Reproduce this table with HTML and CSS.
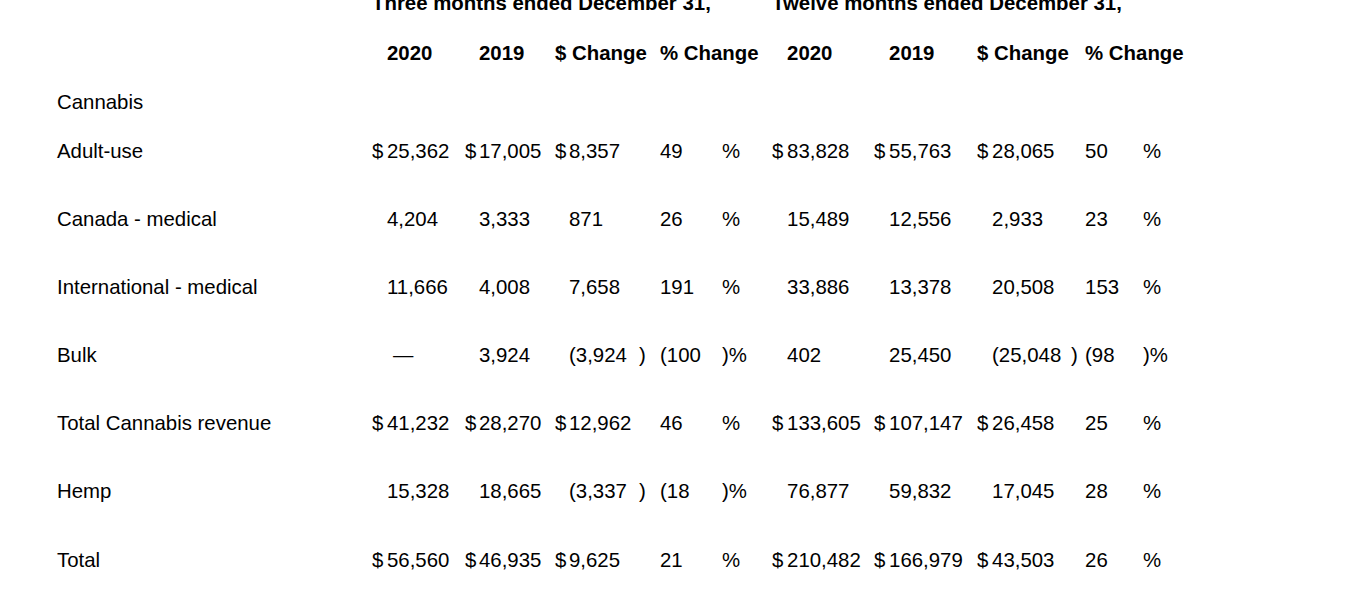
FILE: index.html
```html
<!DOCTYPE html>
<html lang="en">
<head>
<meta charset="utf-8">
<title>Revenue table</title>
<link rel="stylesheet" href="styles.css">
</head>
<body>
<div class="page">
<table class="fin">
  <colgroup>
    <col class="w-label">
    <col class="w15"><col class="w78"><col class="w14"><col class="w76"><col class="w14"><col class="w70"><col class="w21"><col class="w62"><col class="w50">
    <col class="w15"><col class="w87"><col class="w15"><col class="w88"><col class="w15"><col class="w79"><col class="w14"><col class="w58"><col class="w60">
  </colgroup>
  <tbody>
    <tr class="r-title">
      <td></td>
      <td colspan="9" class="b">Three months ended December 31,</td>
      <td colspan="9" class="b">Twelve months ended December 31,</td>
    </tr>
    <tr class="r-head">
      <td></td>
      <td></td><td class="b">2020</td>
      <td></td><td class="b">2019</td>
      <td colspan="3" class="b">$ Change</td>
      <td colspan="2" class="b">% Change</td>
      <td></td><td class="b">2020</td>
      <td></td><td class="b">2019</td>
      <td colspan="3" class="b">$ Change</td>
      <td colspan="2" class="b">% Change</td>
    </tr>
    <tr class="r-49">
      <td>Cannabis</td>
      <td></td><td></td><td></td><td></td><td></td><td></td><td></td><td></td><td></td>
      <td></td><td></td><td></td><td></td><td></td><td></td><td></td><td></td><td></td>
    </tr>
    <tr class="r-49">
      <td>Adult-use</td>
      <td>$</td><td>25,362</td><td>$</td><td>17,005</td><td>$</td><td>8,357</td><td></td><td>49</td><td>%</td>
      <td>$</td><td>83,828</td><td>$</td><td>55,763</td><td>$</td><td>28,065</td><td></td><td>50</td><td>%</td>
    </tr>
    <tr class="r-68">
      <td>Canada - medical</td>
      <td></td><td>4,204</td><td></td><td>3,333</td><td></td><td>871</td><td></td><td>26</td><td>%</td>
      <td></td><td>15,489</td><td></td><td>12,556</td><td></td><td>2,933</td><td></td><td>23</td><td>%</td>
    </tr>
    <tr class="r-68">
      <td>International - medical</td>
      <td></td><td>11,666</td><td></td><td>4,008</td><td></td><td>7,658</td><td></td><td>191</td><td>%</td>
      <td></td><td>33,886</td><td></td><td>13,378</td><td></td><td>20,508</td><td></td><td>153</td><td>%</td>
    </tr>
    <tr class="r-68">
      <td>Bulk</td>
      <td></td><td class="dash">—</td><td></td><td>3,924</td><td></td><td>(3,924</td><td>)</td><td>(100</td><td>)%</td>
      <td></td><td>402</td><td></td><td>25,450</td><td></td><td>(25,048</td><td>)</td><td>(98</td><td>)%</td>
    </tr>
    <tr class="r-68">
      <td>Total Cannabis revenue</td>
      <td>$</td><td>41,232</td><td>$</td><td>28,270</td><td>$</td><td>12,962</td><td></td><td>46</td><td>%</td>
      <td>$</td><td>133,605</td><td>$</td><td>107,147</td><td>$</td><td>26,458</td><td></td><td>25</td><td>%</td>
    </tr>
    <tr class="r-68">
      <td>Hemp</td>
      <td></td><td>15,328</td><td></td><td>18,665</td><td></td><td>(3,337</td><td>)</td><td>(18</td><td>)%</td>
      <td></td><td>76,877</td><td></td><td>59,832</td><td></td><td>17,045</td><td></td><td>28</td><td>%</td>
    </tr>
    <tr class="r-69">
      <td>Total</td>
      <td>$</td><td>56,560</td><td>$</td><td>46,935</td><td>$</td><td>9,625</td><td></td><td>21</td><td>%</td>
      <td>$</td><td>210,482</td><td>$</td><td>166,979</td><td>$</td><td>43,503</td><td></td><td>26</td><td>%</td>
    </tr>
  </tbody>
</table>
</div>
</body>
</html>
```

FILE: styles.css
```css
html, body {
  margin: 0;
  padding: 0;
  background: #ffffff;
}

body {
  font-family: "Liberation Sans", Arial, Helvetica, sans-serif;
  font-size: 20.4px;
  line-height: 23px;
  color: #000000;
}

.page {
  padding-left: 57px;
}

.fin {
  table-layout: fixed;
  border-collapse: collapse;
  border-spacing: 0;
  width: 1146px;
  margin-top: -8px;
}

.fin td {
  padding: 0;
  text-align: left;
  vertical-align: bottom;
  white-space: nowrap;
  overflow: visible;
}

.fin .b {
  font-weight: bold;
}

.fin .dash {
  padding-left: 6px;
}

.w-label { width: 315px; }
.w14 { width: 14px; }
.w15 { width: 15px; }
.w21 { width: 21px; }
.w50 { width: 50px; }
.w58 { width: 58px; }
.w60 { width: 60px; }
.w62 { width: 62px; }
.w70 { width: 70px; }
.w76 { width: 76px; }
.w78 { width: 78px; }
.w79 { width: 79px; }
.w87 { width: 87px; }
.w88 { width: 88px; }

.r-title td { height: 23px; }
.r-head td { height: 50px; }
.r-49 td { height: 49px; }
.r-68 td { height: 68px; }
.r-69 td { height: 69px; }
```
